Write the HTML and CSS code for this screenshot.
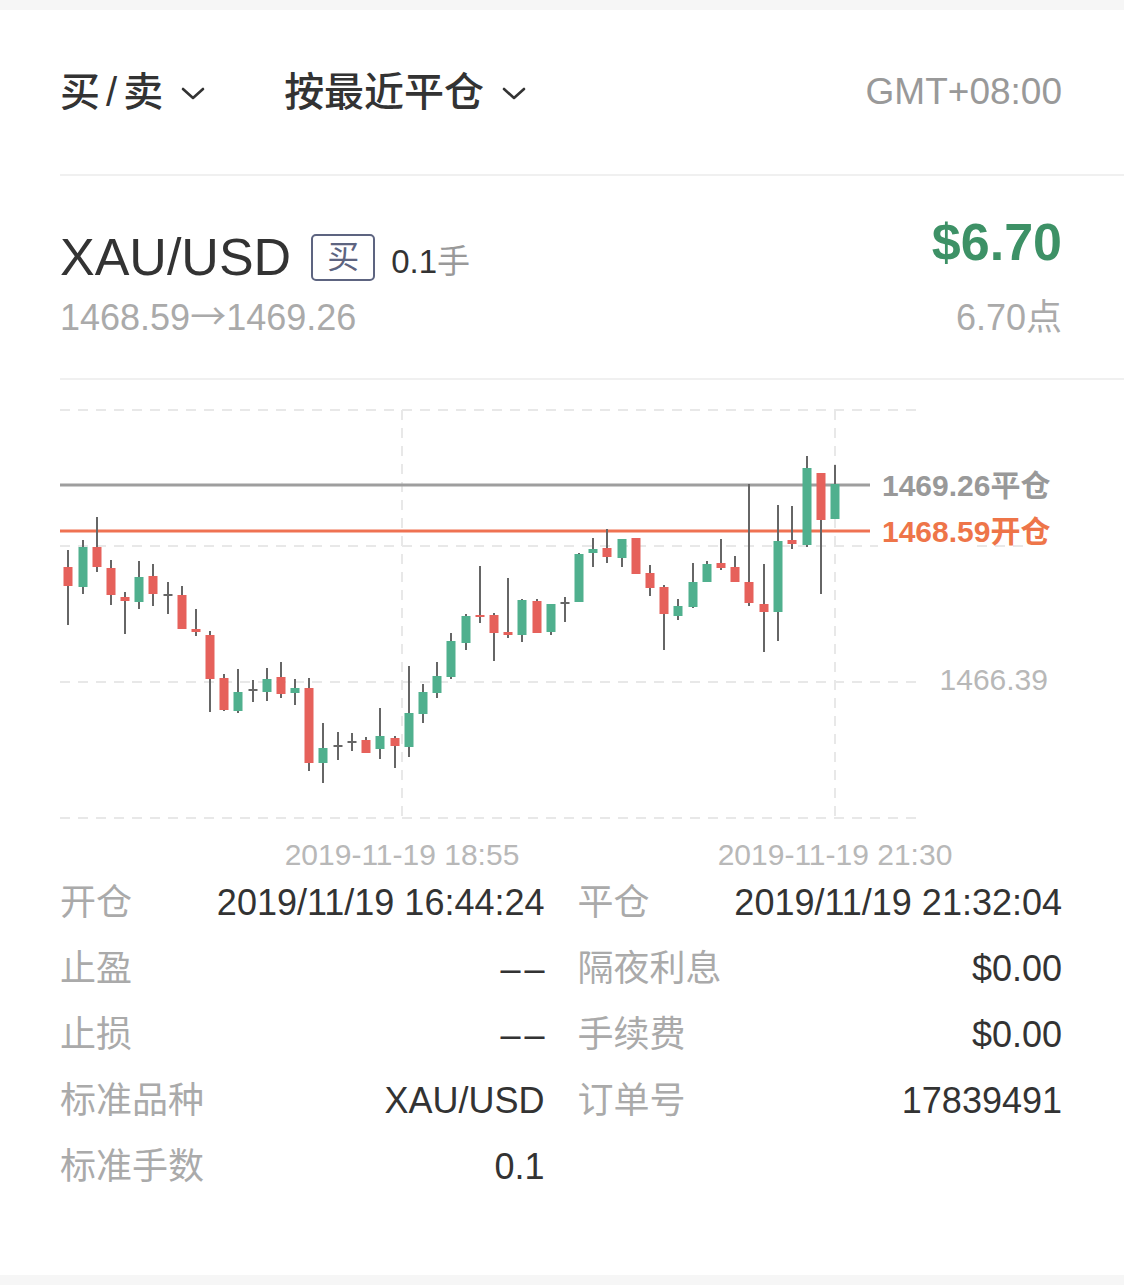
FILE: index.html
```html
<!DOCTYPE html>
<html lang="zh-CN">
<head>
    <meta charset="UTF-8">
    <meta name="viewport" content="width=device-width, initial-scale=1.0">
    <title>订单详情</title>
    <link rel="stylesheet" href="styles.css">
</head>
<body>
    <div class="card">
        <!-- 筛选栏 -->
        <div class="filter">
            <div class="drop">买<span class="slash">/</span>卖
                <svg class="arrow" width="24" height="14" viewBox="0 0 24 14"><polyline points="2,2 12,11 22,2"/></svg>
            </div>
            <div class="drop drop-sort">按最近平仓
                <svg class="arrow" width="24" height="14" viewBox="0 0 24 14"><polyline points="2,2 12,11 22,2"/></svg>
            </div>
            <div class="tz">GMT+08:00</div>
        </div>

        <!-- 品种和盈亏 -->
        <div class="summary">
            <div class="sym">
                <div class="sym-row">
                    <span class="sym-name">XAU/USD</span>
                    <span class="badge">买</span>
                    <span class="lots">0.1<em>手</em></span>
                </div>
                <div class="prices">1468.59<span class="to">→</span>1469.26</div>
            </div>
            <div class="pnl">
                <div class="pnl-amount">$6.70</div>
                <div class="pnl-points">6.70点</div>
            </div>
        </div>

        <!-- K线 -->
        <svg class="chart" width="1124" height="490" viewBox="0 380 1124 490">
            <g class="grid">
                <line x1="60" y1="410" x2="923" y2="410"/>
                <line x1="60" y1="546" x2="878" y2="546"/>
                <line x1="977" y1="546" x2="1025" y2="546"/>
                <line x1="60" y1="682" x2="923" y2="682"/>
                <line x1="60" y1="818" x2="923" y2="818"/>
                <line x1="402" y1="410" x2="402" y2="818"/>
                <line x1="835" y1="410" x2="835" y2="818"/>
            </g>
            <line class="close-line" x1="60" y1="485" x2="870" y2="485"/>
            <line class="open-line" x1="60" y1="531" x2="870" y2="531"/>

            <g class="wicks">
                <line x1="68" y1="550" x2="68" y2="625"/>
                <line x1="83" y1="540" x2="83" y2="594"/>
                <line x1="97" y1="517" x2="97" y2="572"/>
                <line x1="111" y1="560" x2="111" y2="605"/>
                <line x1="125" y1="592" x2="125" y2="634"/>
                <line x1="139" y1="561" x2="139" y2="609"/>
                <line x1="153" y1="564" x2="153" y2="606"/>
                <line x1="168" y1="582" x2="168" y2="614"/>
                <line x1="182" y1="586" x2="182" y2="629"/>
                <line x1="196" y1="609" x2="196" y2="636"/>
                <line x1="210" y1="631" x2="210" y2="712"/>
                <line x1="224" y1="674" x2="224" y2="711"/>
                <line x1="238" y1="669" x2="238" y2="713"/>
                <line x1="253" y1="680" x2="253" y2="702"/>
                <line x1="267" y1="668" x2="267" y2="701"/>
                <line x1="281" y1="662" x2="281" y2="698"/>
                <line x1="295" y1="679" x2="295" y2="705"/>
                <line x1="309" y1="678" x2="309" y2="771"/>
                <line x1="323" y1="723" x2="323" y2="783"/>
                <line x1="338" y1="732" x2="338" y2="760"/>
                <line x1="352" y1="733" x2="352" y2="751"/>
                <line x1="366" y1="737" x2="366" y2="753"/>
                <line x1="380" y1="708" x2="380" y2="759"/>
                <line x1="395" y1="736" x2="395" y2="768"/>
                <line x1="409" y1="666" x2="409" y2="757"/>
                <line x1="423" y1="684" x2="423" y2="723"/>
                <line x1="437" y1="662" x2="437" y2="698"/>
                <line x1="451" y1="633" x2="451" y2="679"/>
                <line x1="466" y1="614" x2="466" y2="650"/>
                <line x1="480" y1="566" x2="480" y2="623"/>
                <line x1="494" y1="613" x2="494" y2="661"/>
                <line x1="508" y1="578" x2="508" y2="638"/>
                <line x1="522" y1="599" x2="522" y2="642"/>
                <line x1="537" y1="599" x2="537" y2="633"/>
                <line x1="551" y1="604" x2="551" y2="635"/>
                <line x1="565" y1="597" x2="565" y2="622"/>
                <line x1="579" y1="553" x2="579" y2="602"/>
                <line x1="593" y1="538" x2="593" y2="567"/>
                <line x1="607" y1="529" x2="607" y2="563"/>
                <line x1="622" y1="539" x2="622" y2="567"/>
                <line x1="636" y1="538" x2="636" y2="574"/>
                <line x1="650" y1="565" x2="650" y2="596"/>
                <line x1="664" y1="585" x2="664" y2="650"/>
                <line x1="678" y1="599" x2="678" y2="620"/>
                <line x1="693" y1="563" x2="693" y2="608"/>
                <line x1="707" y1="561" x2="707" y2="582"/>
                <line x1="721" y1="539" x2="721" y2="570"/>
                <line x1="735" y1="556" x2="735" y2="582"/>
                <line x1="749" y1="484" x2="749" y2="606"/>
                <line x1="764" y1="564" x2="764" y2="652"/>
                <line x1="778" y1="505" x2="778" y2="641"/>
                <line x1="792" y1="506" x2="792" y2="549"/>
                <line x1="807" y1="456" x2="807" y2="547"/>
                <line x1="821" y1="473" x2="821" y2="594"/>
                <line x1="835" y1="465" x2="835" y2="519"/>
            </g>

            <g class="up">
                <rect x="78.5" y="547" width="9" height="40"/>
                <rect x="134.5" y="577" width="9" height="25"/>
                <rect x="233.5" y="692" width="9" height="19"/>
                <rect x="262.5" y="679" width="9" height="13"/>
                <rect x="290.5" y="688" width="9" height="5"/>
                <rect x="318.5" y="748" width="9" height="15"/>
                <rect x="375.5" y="736" width="9" height="13"/>
                <rect x="404.5" y="713" width="9" height="34"/>
                <rect x="418.5" y="692" width="9" height="22"/>
                <rect x="432.5" y="676" width="9" height="17"/>
                <rect x="446.5" y="641" width="9" height="36"/>
                <rect x="461.5" y="616" width="9" height="27"/>
                <rect x="517.5" y="600" width="9" height="35"/>
                <rect x="546.5" y="604" width="9" height="28"/>
                <rect x="574.5" y="554" width="9" height="48"/>
                <rect x="588.5" y="549" width="9" height="4"/>
                <rect x="617.5" y="539" width="9" height="19"/>
                <rect x="673.5" y="606" width="9" height="10"/>
                <rect x="688.5" y="582" width="9" height="25"/>
                <rect x="702.5" y="564" width="9" height="18"/>
                <rect x="773.5" y="541" width="9" height="71"/>
                <rect x="802.5" y="468" width="9" height="77"/>
                <rect x="830.5" y="484" width="9" height="35"/>
            </g>

            <g class="down">
                <rect x="63.5" y="567" width="9" height="19"/>
                <rect x="92.5" y="547" width="9" height="20"/>
                <rect x="106.5" y="568" width="9" height="27"/>
                <rect x="120.5" y="597" width="9" height="4"/>
                <rect x="148.5" y="576" width="9" height="18"/>
                <rect x="177.5" y="595" width="9" height="34"/>
                <rect x="191.5" y="629" width="9" height="3"/>
                <rect x="205.5" y="635" width="9" height="44"/>
                <rect x="219.5" y="678" width="9" height="32"/>
                <rect x="276.5" y="677" width="9" height="17"/>
                <rect x="304.5" y="688" width="9" height="75"/>
                <rect x="361.5" y="740" width="9" height="13"/>
                <rect x="390.5" y="738" width="9" height="8"/>
                <rect x="475.5" y="615" width="9" height="2"/>
                <rect x="489.5" y="615" width="9" height="18"/>
                <rect x="503.5" y="632" width="9" height="3"/>
                <rect x="532.5" y="601" width="9" height="32"/>
                <rect x="602.5" y="548" width="9" height="9"/>
                <rect x="631.5" y="538" width="9" height="36"/>
                <rect x="645.5" y="573" width="9" height="15"/>
                <rect x="659.5" y="587" width="9" height="27"/>
                <rect x="716.5" y="563" width="9" height="5"/>
                <rect x="730.5" y="567" width="9" height="15"/>
                <rect x="744.5" y="582" width="9" height="21"/>
                <rect x="759.5" y="604" width="9" height="8"/>
                <rect x="787.5" y="540" width="9" height="4"/>
                <rect x="816.5" y="473" width="9" height="47"/>
            </g>

            <g class="flat">
                <rect x="163.5" y="594" width="9" height="2"/>
                <rect x="248.5" y="689" width="9" height="2"/>
                <rect x="333.5" y="745" width="9" height="2"/>
                <rect x="347.5" y="741" width="9" height="2"/>
                <rect x="560.5" y="602" width="9" height="2"/>
            </g>

            <text class="tag tag-close" x="882" y="496">1469.26平仓</text>
            <text class="tag tag-open" x="882" y="542">1468.59开仓</text>
            <text class="axis" x="1048" y="690" text-anchor="end">1466.39</text>
            <text class="axis" x="402" y="865" text-anchor="middle">2019-11-19 18:55</text>
            <text class="axis" x="835" y="865" text-anchor="middle">2019-11-19 21:30</text>
        </svg>

        <!-- 订单信息 -->
        <div class="info">
            <div class="cell"><span class="k">开仓</span><span class="v">2019/11/19 16:44:24</span></div>
            <div class="cell"><span class="k">平仓</span><span class="v">2019/11/19 21:32:04</span></div>
            <div class="cell"><span class="k">止盈</span><span class="v empty">––</span></div>
            <div class="cell"><span class="k">隔夜利息</span><span class="v">$0.00</span></div>
            <div class="cell"><span class="k">止损</span><span class="v empty">––</span></div>
            <div class="cell"><span class="k">手续费</span><span class="v">$0.00</span></div>
            <div class="cell"><span class="k">标准品种</span><span class="v">XAU/USD</span></div>
            <div class="cell"><span class="k">订单号</span><span class="v">17839491</span></div>
            <div class="cell"><span class="k">标准手数</span><span class="v">0.1</span></div>
        </div>
    </div>
</body>
</html>
```

FILE: styles.css
```css
* {
    margin: 0;
    padding: 0;
    box-sizing: border-box;
}
body {
    background: #f6f6f6;
    padding-top: 10px;
    font-family: "Liberation Sans", "Noto Sans CJK SC", sans-serif;
    color: #333;
}
.card {
    background: #fff;
    height: 1265px;
}

/* 筛选栏 */
.filter {
    display: flex;
    align-items: center;
    height: 166px;
    margin-left: 60px;
    padding-right: 62px;
    border-bottom: 2px solid #f0f0f0;
}
.drop {
    display: flex;
    align-items: center;
    font-size: 40px;
    line-height: 48px;
    font-weight: 500;
    color: #333;
}
.drop .slash {
    margin: 0 6px;
}
.drop .arrow {
    margin-left: 18px;
    margin-top: 4px;
}
.drop .arrow polyline {
    fill: none;
    stroke: #333;
    stroke-width: 2.6;
    stroke-linecap: round;
    stroke-linejoin: round;
}
.drop-sort {
    margin-left: 79px;
}
.tz {
    margin-left: auto;
    font-size: 37px;
    color: #999;
}

/* 品种和盈亏 */
.summary {
    display: flex;
    justify-content: space-between;
    align-items: flex-start;
    height: 204px;
    margin-left: 60px;
    padding-right: 62px;
    border-bottom: 2px solid #f0f0f0;
}
.sym {
    padding-top: 51px;
}
.sym-row {
    display: flex;
    align-items: center;
    height: 60px;
}
.sym-name {
    font-size: 52px;
    line-height: 60px;
    color: #333;
}
.badge {
    margin-left: 20px;
    width: 64px;
    height: 47px;
    border: 2px solid #5d6480;
    border-radius: 5px;
    color: #5d6480;
    font-size: 32px;
    line-height: 43px;
    text-align: center;
}
.lots {
    margin-left: 16px;
    margin-top: 4px;
    font-size: 33px;
    color: #333;
}
.lots em {
    font-style: normal;
    color: #999;
}
.prices {
    margin-top: 9px;
    height: 44px;
    font-size: 36px;
    line-height: 44px;
    color: #aaa;
}
.prices .to {
    font-family: "Noto Sans CJK SC", sans-serif;
    line-height: 1;
}
.pnl {
    padding-top: 36px;
    text-align: right;
}
.pnl-amount {
    font-size: 52px;
    line-height: 60px;
    font-weight: bold;
    color: #3d9166;
}
.pnl-points {
    margin-top: 24px;
    font-size: 36px;
    line-height: 44px;
    color: #aaa;
}

/* K线 */
.chart {
    display: block;
}
.chart .grid line {
    stroke: #e8e8e8;
    stroke-width: 2;
    stroke-dasharray: 10 8;
}
.chart .close-line {
    stroke: #9e9e9e;
    stroke-width: 3;
}
.chart .open-line {
    stroke: #ef7252;
    stroke-width: 3;
}
.chart .wicks line {
    stroke: #666;
    stroke-width: 2;
}
.chart .up rect {
    fill: #50b08e;
}
.chart .down rect {
    fill: #e6615b;
}
.chart .flat rect {
    fill: #666;
}
.chart text {
    font-family: "Liberation Sans", "Noto Sans CJK SC", sans-serif;
}
.chart .tag {
    font-size: 30px;
    font-weight: bold;
}
.chart .tag-close {
    fill: #999;
}
.chart .tag-open {
    fill: #ee7549;
}
.chart .axis {
    font-size: 30px;
    fill: #b8b8b8;
}

/* 订单信息 */
.info {
    display: grid;
    grid-template-columns: 1fr 1fr;
    column-gap: 33px;
    padding: 0 62px 0 60px;
}
.cell {
    display: flex;
    justify-content: space-between;
    height: 66px;
    line-height: 66px;
    font-size: 36px;
}
.cell .k {
    color: #aaa;
}
.cell .v {
    color: #333;
}
.cell .empty {
    letter-spacing: 4px;
    margin-right: -4px;
}
```
